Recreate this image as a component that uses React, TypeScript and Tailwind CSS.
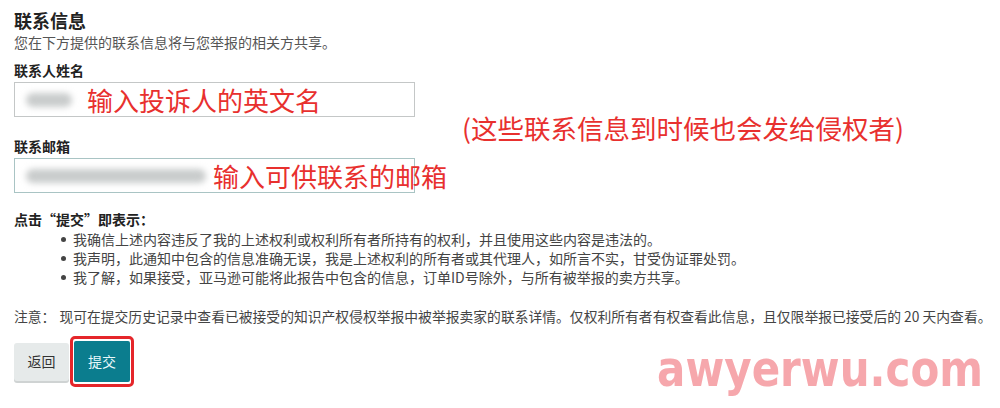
import React from 'react'

const cjk = "font-['Microsoft_YaHei','Noto_Sans_CJK_SC','Noto_Sans',sans-serif]"

const bullets = [
  '我确信上述内容违反了我的上述权利或权利所有者所持有的权利，并且使用这些内容是违法的。',
  '我声明，此通知中包含的信息准确无误，我是上述权利的所有者或其代理人，如所言不实，甘受伪证罪处罚。',
  '我了解，如果接受，亚马逊可能将此报告中包含的信息，订单ID号除外，与所有被举报的卖方共享。'
]

function Field({ label, blobWidth, gap, note, tint, top }: { label: string; blobWidth: string; gap: string; note: string; tint: string; top: string }) {
  return (
    <div className={top}>
      <div className="text-[14px] leading-[18px] font-bold text-[#222]">{label}</div>
      <div className={`mt-[3px] flex items-center w-[401px] h-[35px] pl-[11px] border bg-white ${tint} ${gap}`}>
        <div className={`h-[14px] shrink-0 rounded-full bg-[#c9cccc] blur-[3px] ${blobWidth}`} />
        <span className="text-[26px] leading-[32px] text-[#e8302e] whitespace-nowrap">{note}</span>
      </div>
    </div>
  )
}

export default function App() {
  return (
    <div className={`w-[1000px] h-[408px] overflow-hidden bg-white text-[#333] pl-[14px] pr-[17px] pt-[9px] ${cjk}`}>
      <div className="flex items-start">
        <div className="w-[401px] shrink-0">
          <h1 className="text-[18px] leading-[22px] font-bold text-[#222]">联系信息</h1>
          <p className="mt-[2px] text-[14px] leading-[18px] text-[#555]">您在下方提供的联系信息将与您举报的相关方共享。</p>
          <Field top="mt-[10px]" label="联系人姓名" blobWidth="w-[46px]" gap="gap-[15px]" note="输入投诉人的英文名" tint="border-[#c4c7c7]" />
          <Field top="mt-[20px]" label="联系邮箱" blobWidth="w-[180px]" gap="gap-[7px]" note="输入可供联系的邮箱" tint="border-[#a9c4c4]" />
        </div>
        <span className="ml-[47px] mt-[103px] text-[26.5px] leading-[32px] text-[#e8302e] whitespace-nowrap">(这些联系信息到时候也会发给侵权者)</span>
      </div>

      <div className="mt-[17px] text-[14px] leading-[18px] font-bold text-[#222]">点击“提交”即表示：</div>
      <ul className="mt-[2px] pl-[47px]">
        {bullets.map((b) => (
          <li key={b} className="flex items-center text-[14px] leading-[19px] text-[#444]">
            <span className="w-[12px] shrink-0">
              <span className="block w-[5px] h-[5px] rounded-full bg-[#444]" />
            </span>
            <span>{b}</span>
          </li>
        ))}
      </ul>

      <p className="mt-[20px] flex gap-[4px] text-[13.8px] leading-[18px] text-[#444] whitespace-nowrap">
        <span>注意：</span>
        <span>现可在提交历史记录中查看已被接受的知识产权侵权举报中被举报卖家的联系详情。仅权利所有者有权查看此信息，且仅限举报已接受后的 20 天内查看。</span>
      </p>

      <div className="mt-[11px] flex items-start justify-between">
        <div className="flex items-center gap-[1px]">
          <button className="w-[55px] h-[38px] rounded-[3px] bg-[#e6eaea] text-[14px] text-[#333] shadow-[0_2px_0_#cfd3d3]">返回</button>
          <div className="rounded-[5px] border-[3px] border-[#e5262a] px-[1px] py-[2px]">
            <button className="block w-[56px] h-[41px] rounded-[2px] bg-[#0b7d8e] text-[14px] text-[#e8f8fa]">提交</button>
          </div>
        </div>
        <span className="mt-[8px] origin-center scale-y-[1.2] font-['DejaVu_Sans',sans-serif] font-bold text-[42px] leading-[50px] text-[#f6a7ac] whitespace-nowrap">awyerwu.com</span>
      </div>
    </div>
  )
}
